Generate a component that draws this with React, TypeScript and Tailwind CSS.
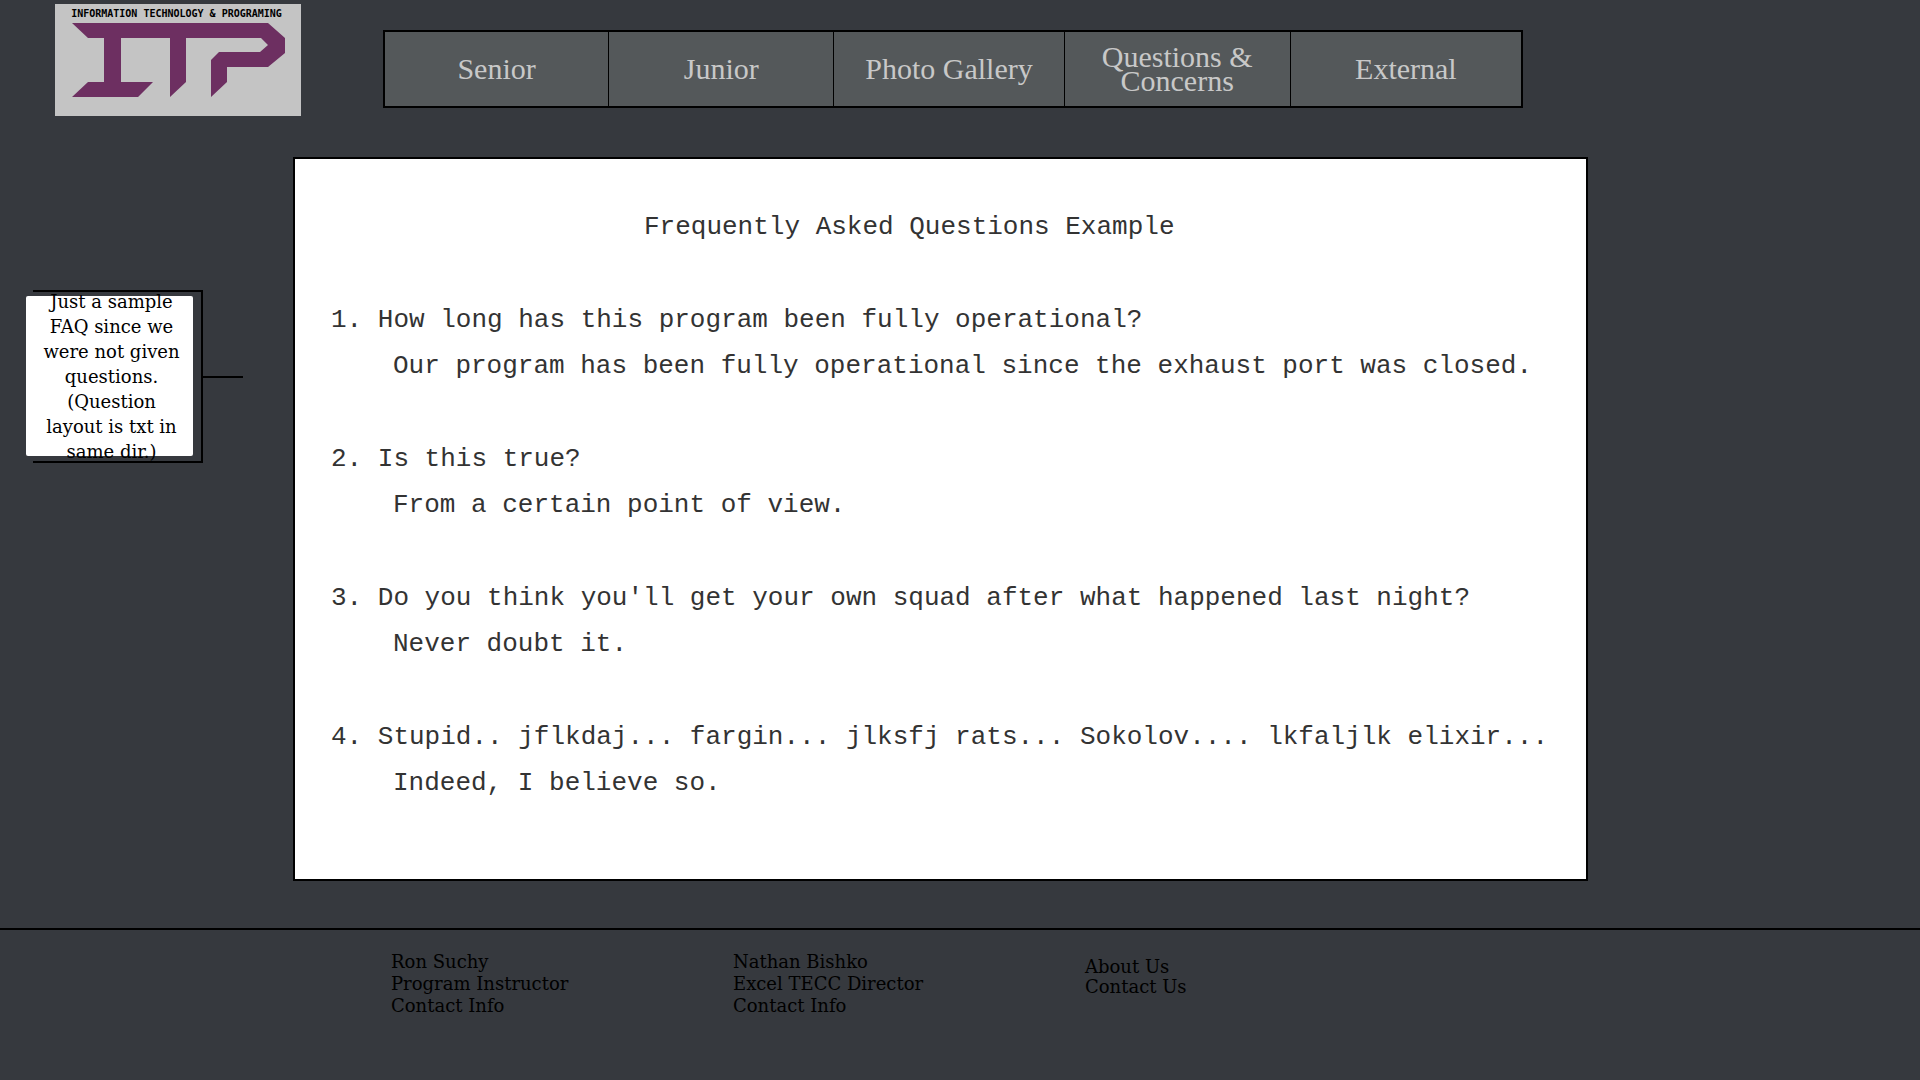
const navItems = ["Senior", "Junior", "Photo Gallery", "Questions & Concerns", "External"];

const faqs = [
  {
    question: "How long has this program been fully operational?",
    answer: "Our program has been fully operational since the exhaust port was closed.",
  },
  { question: "Is this true?", answer: "From a certain point of view." },
  {
    question: "Do you think you'll get your own squad after what happened last night?",
    answer: "Never doubt it.",
  },
  {
    question: "Stupid.. jflkdaj... fargin... jlksfj rats... Sokolov.... lkfaljlk elixir...",
    answer: "Indeed, I believe so.",
  },
];

const contacts = [
  { name: "Ron Suchy", role: "Program Instructor" },
  { name: "Nathan Bishko", role: "Excel TECC Director" },
];

function Logo() {
  return (
    <a
      href="#"
      className="relative ml-[55px] mt-1 block h-28 w-[246px] bg-[#c4c4c4] pr-[3px] font-['DejaVu_Sans_Mono',monospace] text-[10px] font-bold leading-[19px] text-black"
    >
      <span className="block whitespace-nowrap text-center">INFORMATION TECHNOLOGY &amp; PROGRAMING</span>
      <svg viewBox="0 0 246 112" className="absolute inset-0 h-28 w-[246px]" aria-hidden="true">
        <path
          fill="#6d2f61"
          d="M17 19H213L230 34V49L213 63H172V78L156 93V56L164 48H205L213 41L206 34H131V78L115 93V34H66V78H98L83 93H17L33 78H49V34H33Z"
        />
      </svg>
    </a>
  );
}

function Nav() {
  return (
    <nav className="mt-[30px] grid h-[78px] grid-cols-[225fr_226fr_231fr_227fr_231fr] divide-x divide-black border-2 border-black bg-[#54585a] font-['Liberation_Serif',serif] text-[30px] leading-6 text-[#c8c8c8]">
      {navItems.map((item) => (
        <a key={item} href="#" className="flex items-center justify-center px-6 text-center">
          {item}
        </a>
      ))}
    </nav>
  );
}

function Note() {
  return (
    <aside className="mt-[133px] flex items-center pl-[26px]">
      <div className="relative h-[173px] w-[177px] py-[6px]">
        <div className="absolute inset-y-0 left-[7px] right-0 border-y-2 border-r-2 border-black" />
        <div className="relative flex h-40 w-[167px] items-center justify-center rounded-xs bg-white pl-1 text-center font-['DejaVu_Serif',serif] text-[18px] leading-[25px] text-black">
          <p className="w-[148px] shrink-0">
            Just a sample FAQ since we were not given questions. (Question layout is txt in same dir.)
          </p>
        </div>
      </div>
      <div className="h-0.5 w-10 bg-black" />
    </aside>
  );
}

function Faq() {
  return (
    <main className="whitespace-nowrap border-2 border-black bg-white pb-[73px] pl-9 pt-[45px] font-['Liberation_Mono',monospace] text-[26px] leading-[46px] text-[#333]">
      <h1 className="pl-[313px]">Frequently Asked Questions Example</h1>
      <ol>
        {faqs.map((faq, index) => (
          <li key={faq.question} className="mt-[47px]">
            <h2 className="whitespace-pre">{`${index + 1}. ${faq.question}`}</h2>
            <p className="pl-[62px]">{faq.answer}</p>
          </li>
        ))}
      </ol>
    </main>
  );
}

function Footer() {
  return (
    <footer className="mt-[47px] grid grid-cols-[342fr_352fr_835fr] border-t-2 border-black pl-[391px] pt-[21px] font-['DejaVu_Serif',serif] text-[18px] text-black">
      {contacts.map((person) => (
        <address key={person.name} className="not-italic leading-[22px]">
          <p>{person.name}</p>
          <p>{person.role}</p>
          <a href="#">Contact Info</a>
        </address>
      ))}
      <div className="flex flex-col items-start pt-[6px] leading-5">
        <a href="#">About Us</a>
        <a href="#">Contact Us</a>
      </div>
    </footer>
  );
}

export default function App() {
  return (
    <div className="min-h-screen overflow-x-hidden bg-[#36393e]">
      <header className="grid grid-cols-[383fr_1140fr_397fr] items-start">
        <Logo />
        <Nav />
      </header>
      <div className="mt-[41px] grid grid-cols-[293fr_1295fr_332fr] items-start">
        <Note />
        <Faq />
      </div>
      <Footer />
    </div>
  );
}
